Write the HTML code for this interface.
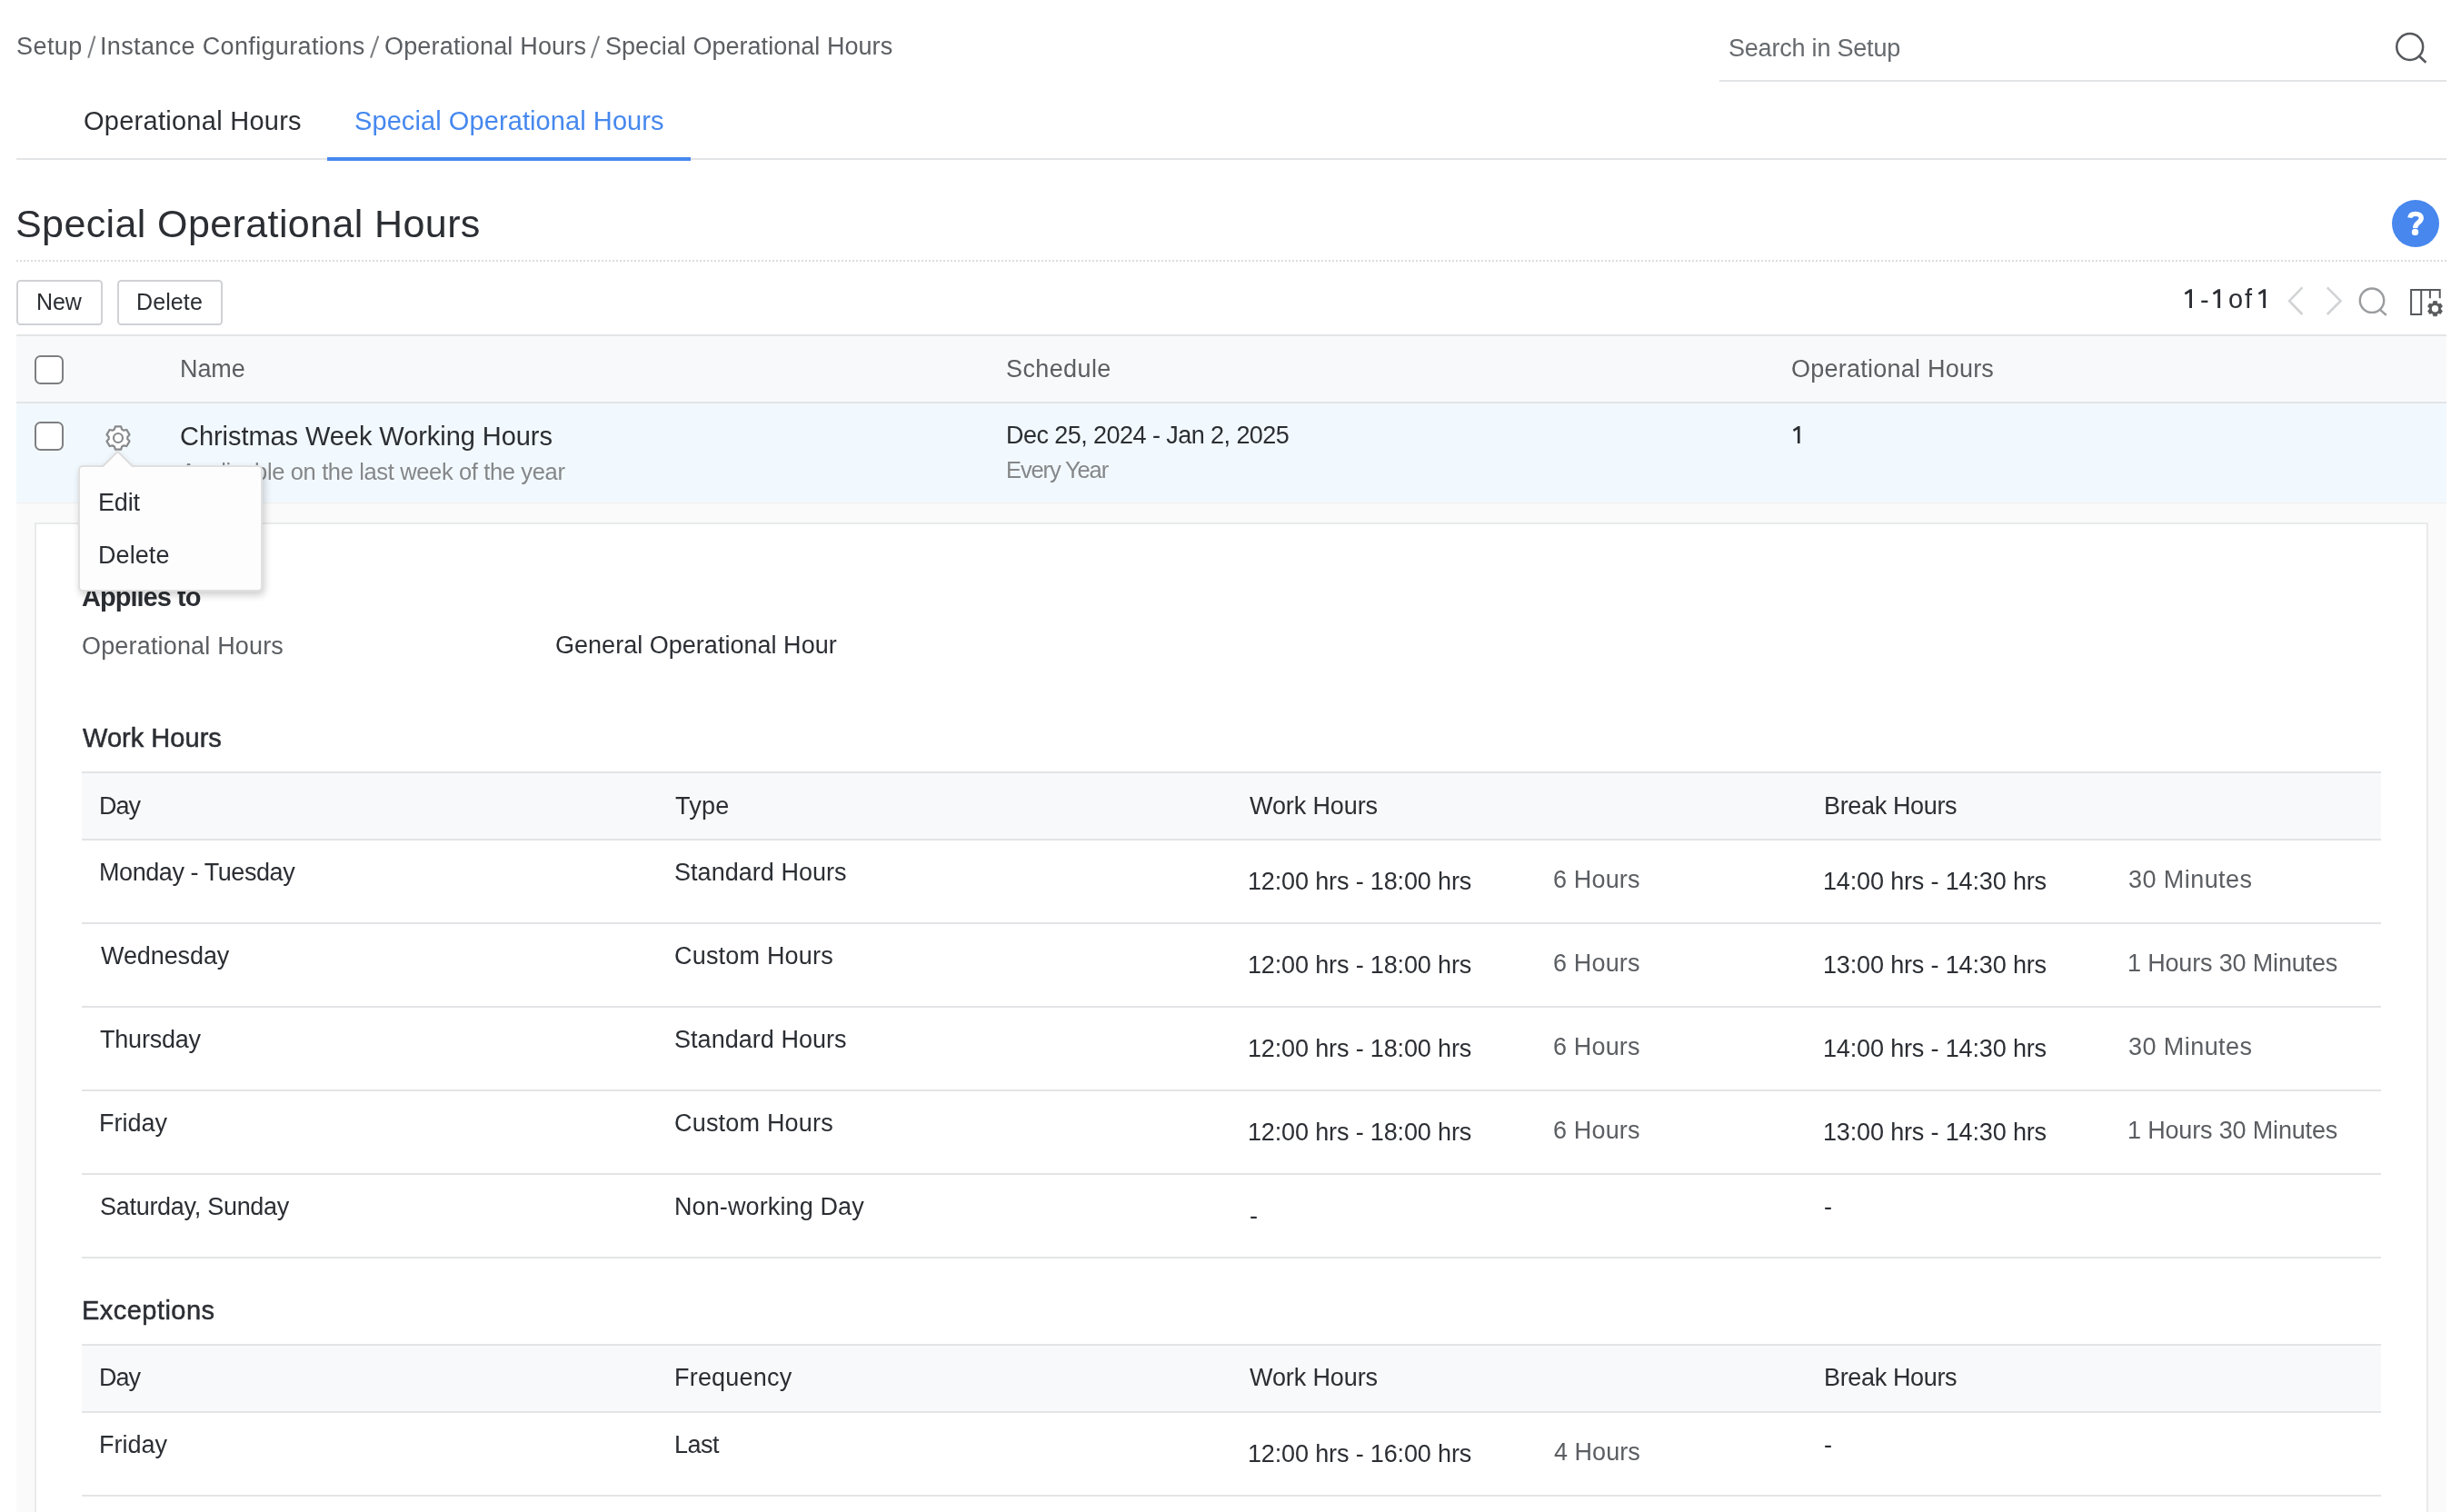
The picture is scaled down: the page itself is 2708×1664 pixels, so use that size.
<!DOCTYPE html>
<html><head><meta charset="utf-8"><title>Special Operational Hours</title>
<style>
html,body{margin:0;padding:0;background:#fff;}
body{width:2708px;height:1664px;overflow:hidden;position:relative;font-family:"Liberation Sans",sans-serif;}
.t{position:absolute;white-space:pre;will-change:transform;font-family:"Liberation Sans",sans-serif;}
.b{position:absolute;}
</style></head><body>
<div class="b" style="left:1892px;top:88px;width:800px;height:2px;background:#e3e4e6"></div>
<div class="b" style="left:18px;top:174px;width:2674px;height:2px;background:#e3e4e6"></div>
<div class="b" style="left:360px;top:173px;width:400px;height:4px;background:#4688ee"></div>
<div class="b" style="left:18px;top:286px;width:2674px;height:2px;background:repeating-linear-gradient(to right,#dddddd 0,#dddddd 2px,transparent 2px,transparent 4px)"></div>
<div class="b" style="left:18.2px;top:308px;width:94.4px;height:49.7px;box-sizing:border-box;border:2px solid #d0d1d4;border-radius:4.5px;background:#fff"></div>
<div class="b" style="left:129.1px;top:308px;width:115.75px;height:49.7px;box-sizing:border-box;border:2px solid #d0d1d4;border-radius:4.5px;background:#fff"></div>
<div class="b" style="left:18px;top:368px;width:2674px;height:76px;box-sizing:border-box;background:#f8f9fa;border-top:2px solid #e3e4e6;border-bottom:2px solid #e3e4e6"></div>
<div class="b" style="left:18px;top:444px;width:2674px;height:109px;background:#f2f9fe"></div>
<div class="b" style="left:18px;top:553px;width:2674px;height:1111px;background:#fafafa"></div>
<div class="b" style="left:18px;top:552.8px;width:2674px;height:1.6px;background:#efefef"></div>
<div class="b" style="left:38px;top:575px;width:2634px;height:1100px;box-sizing:border-box;background:#fff;border:2px solid #e9eaec"></div>
<div class="b" style="left:38px;top:391px;width:32px;height:32px;box-sizing:border-box;border:2px solid #7d7f82;border-radius:6.5px;background:#fff"></div>
<div class="b" style="left:38px;top:464px;width:32px;height:32px;box-sizing:border-box;border:2px solid #7d7f82;border-radius:6.5px;background:#fff"></div>
<div class="b" style="left:90px;top:849px;width:2530px;height:76px;box-sizing:border-box;background:#f8f9fa;border-top:2px solid #e3e4e6;border-bottom:2px solid #e3e4e6"></div><div class="b" style="left:90px;top:1015px;width:2530px;height:2px;background:#e3e4e6"></div><div class="b" style="left:90px;top:1107px;width:2530px;height:2px;background:#e3e4e6"></div><div class="b" style="left:90px;top:1199px;width:2530px;height:2px;background:#e3e4e6"></div><div class="b" style="left:90px;top:1291px;width:2530px;height:2px;background:#e3e4e6"></div><div class="b" style="left:90px;top:1383px;width:2530px;height:2px;background:#e3e4e6"></div>
<div class="b" style="left:90px;top:1479px;width:2530px;height:76px;box-sizing:border-box;background:#f8f9fa;border-top:2px solid #e3e4e6;border-bottom:2px solid #e3e4e6"></div><div class="b" style="left:90px;top:1645px;width:2530px;height:2px;background:#e3e4e6"></div>
<svg class="b" style="left:0;top:0" width="1000" height="80" viewBox="0 0 1000 80" fill="none" stroke="#7b7d80" stroke-width="2"><path d="M97.2 63.7 L104.4 39.6 M408 63.7 L416.3 39.6 M650.9 63.7 L659.1 39.6"/></svg>
<svg class="b" style="left:2630px;top:30px" width="48" height="48" viewBox="0 0 48 48" fill="none" stroke="#55585c" stroke-width="2.5"><circle cx="21.7" cy="21.5" r="14.45"/><path stroke-width="2.7" d="M32.0 31.7 L39.4 38.7"/></svg>
<div class="b" style="left:2632px;top:220px;width:52px;height:52px;border-radius:50%;background:#4787ee"></div>
<svg class="b" style="left:2632px;top:220px" width="52" height="52" viewBox="0 0 52 52" fill="none" stroke="#fff" stroke-width="5.3"><path d="M19.7 19.6 C20.2 16.8 22.8 15.3 26 15.3 C29.8 15.3 32.3 17.3 32.3 20.1 C32.3 22.4 30.9 23.6 28.9 25.1 C26.7 26.7 25.7 27.9 25.7 31"/><circle cx="25.5" cy="35.4" r="3.7" fill="#fff" stroke="none"/></svg>
<svg class="b" style="left:2390px;top:300px" width="120" height="50" viewBox="0 0 120 50" fill="#2b2e33"><path d="M19.70 18.20 L22.00 18.20 L22.00 39.00 L19.10 39.00 L19.10 21.90 L14.90 24.60 L13.70 22.30Z"/><path d="M50.80 18.20 L53.10 18.20 L53.10 39.00 L50.20 39.00 L50.20 21.90 L46.00 24.60 L44.80 22.30Z"/><path d="M100.80 18.20 L103.10 18.20 L103.10 39.00 L100.20 39.00 L100.20 21.90 L96.00 24.60 L94.80 22.30Z"/></svg>
<svg class="b" style="left:1960px;top:460px" width="40" height="40" viewBox="0 0 40 40" fill="#2b2e33"><path d="M18.46 9.00 L20.60 9.00 L20.60 28.00 L17.90 28.00 L17.90 12.44 L14.00 14.95 L12.88 12.81Z"/></svg>
<svg class="b" style="left:2510px;top:310px" width="76" height="44" viewBox="0 0 76 44" fill="none" stroke="#d2d3d5" stroke-width="2.6"><path d="M23.4 6.4 L9.1 21.2 L23.4 36"/><path d="M50.8 6.4 L65.5 21.2 L50.8 36"/></svg>
<svg class="b" style="left:2590px;top:310px" width="44" height="44" viewBox="0 0 44 44" fill="none" stroke="#9a9c9e" stroke-width="2.4"><circle cx="20.0" cy="20.7" r="13.2"/><path d="M29.0 30.8 L35.8 36.8"/></svg>
<svg class="b" style="left:2646px;top:312px" width="48" height="44" viewBox="0 0 48 44" fill="none" stroke="#57595c" stroke-width="2"><rect x="7.1" y="7" width="11.1" height="27"/><path d="M18.2 7 H38.7 V16.2 M27.9 7 V16.2"/><g transform="translate(33.5 27.7)"><path fill="#57595c" stroke="#57595c" stroke-width="0.8" stroke-linejoin="round" d="M2.48 -5.57 L1.87 -8.09 L-1.87 -8.09 L-2.48 -5.57 L-3.59 -4.94 L-6.07 -5.66 L-7.94 -2.43 L-6.07 -0.64 L-6.07 0.64 L-7.94 2.43 L-6.07 5.66 L-3.59 4.94 L-2.48 5.57 L-1.87 8.09 L1.87 8.09 L2.48 5.57 L3.59 4.94 L6.07 5.66 L7.94 2.43 L6.07 0.64 L6.07 -0.64 L7.94 -2.43 L6.07 -5.66 L3.59 -4.94Z"/><circle cx="0" cy="0" r="3.7" fill="#fff" stroke="none"/></g></svg>
<svg class="b" style="left:113.8px;top:465.8px" width="32" height="32" viewBox="-16 -16 32 32" fill="#fff" stroke="#87898c" stroke-width="2.2" stroke-linejoin="round"><path d="M4.06 -9.57 L3.14 -12.61 L-3.14 -12.61 L-4.06 -9.57 L-6.26 -8.31 L-9.35 -9.03 L-12.50 -3.58 L-10.32 -1.27 L-10.32 1.27 L-12.50 3.58 L-9.35 9.03 L-6.26 8.31 L-4.06 9.57 L-3.14 12.61 L3.14 12.61 L4.06 9.57 L6.26 8.31 L9.35 9.03 L12.50 3.58 L10.32 1.27 L10.32 -1.27 L12.50 -3.58 L9.35 -9.03 L6.26 -8.31Z"/><circle cx="0" cy="0" r="5"/></svg>
<span class="t" id="bc1" style="left:17.51px;top:35.86px;font-size:27px;line-height:30.159px;color:#5b5e62;letter-spacing:0.438px;">Setup</span>
<span class="t" id="bc2" style="left:110.40px;top:35.86px;font-size:27px;line-height:30.159px;color:#5b5e62;letter-spacing:0.349px;">Instance Configurations</span>
<span class="t" id="bc3" style="left:422.96px;top:35.86px;font-size:27px;line-height:30.159px;color:#5b5e62;letter-spacing:0.178px;">Operational Hours</span>
<span class="t" id="bc4" style="left:665.81px;top:35.86px;font-size:27px;line-height:30.159px;color:#5b5e62;letter-spacing:0.040px;">Special Operational Hours</span>
<span class="t" id="search" style="left:1901.81px;top:37.56px;font-size:27px;line-height:30.159px;color:#666a6e;letter-spacing:-0.209px;">Search in Setup</span>
<span class="t" id="tab1" style="left:91.56px;top:116.66px;font-size:29px;line-height:32.393px;color:#2b2e33;letter-spacing:0.267px;">Operational Hours</span>
<span class="t" id="tab2" style="left:390.06px;top:116.66px;font-size:29px;line-height:32.393px;color:#4688ee;letter-spacing:0.085px;">Special Operational Hours</span>
<span class="t" id="title" style="left:17.19px;top:221.89px;font-size:43px;line-height:48.031px;color:#2b2e33;letter-spacing:0.392px;">Special Operational Hours</span>
<span class="t" id="new" style="left:39.84px;top:318.57px;font-size:25px;line-height:27.925px;color:#2b2e33;letter-spacing:-0.091px;">New</span>
<span class="t" id="del" style="left:150.24px;top:318.57px;font-size:25px;line-height:27.925px;color:#2b2e33;letter-spacing:0.113px;">Delete</span>
<span class="t" id="pg2" style="left:2420.50px;top:313.66px;font-size:29px;line-height:32.393px;color:#2b2e33;letter-spacing:0.000px;">-</span>
<span class="t" id="pg4" style="left:2451.64px;top:312.56px;font-size:29px;line-height:32.393px;color:#2b2e33;letter-spacing:1.922px;">of</span>
<span class="t" id="h_name" style="left:197.76px;top:390.87px;font-size:27px;line-height:30.159px;color:#5b5e62;letter-spacing:-0.076px;">Name</span>
<span class="t" id="h_sched" style="left:1106.51px;top:390.87px;font-size:27px;line-height:30.159px;color:#5b5e62;letter-spacing:0.387px;">Schedule</span>
<span class="t" id="h_oh" style="left:1970.66px;top:390.87px;font-size:27px;line-height:30.159px;color:#5b5e62;letter-spacing:0.235px;">Operational Hours</span>
<span class="t" id="r_name" style="left:197.57px;top:463.75px;font-size:29px;line-height:32.393px;color:#2b2e33;letter-spacing:-0.058px;">Christmas Week Working Hours</span>
<span class="t" id="r_sub" style="left:199.23px;top:505.02px;font-size:25.5px;line-height:28.483px;color:#858789;letter-spacing:-0.361px;">Applicable on the last week of the year</span>
<span class="t" id="r_date" style="left:1106.76px;top:463.87px;font-size:27px;line-height:30.159px;color:#2b2e33;letter-spacing:-0.557px;">Dec 25, 2024 - Jan 2, 2025</span>
<span class="t" id="r_every" style="left:1106.89px;top:503.32px;font-size:25.5px;line-height:28.483px;color:#858789;letter-spacing:-1.131px;">Every Year</span>
<span class="t" id="applies" style="left:90.19px;top:640.65px;font-size:29px;line-height:32.393px;color:#2b2e33;letter-spacing:-0.977px;font-weight:bold;">Applies to</span>
<span class="t" id="l_oh" style="left:89.86px;top:695.66px;font-size:27px;line-height:30.159px;color:#5b5e62;letter-spacing:0.172px;">Operational Hours</span>
<span class="t" id="v_goh" style="left:610.98px;top:695.46px;font-size:27px;line-height:30.159px;color:#2b2e33;letter-spacing:0.023px;">General Operational Hour</span>
<span class="t" id="wh_title" style="left:90.59px;top:795.75px;font-size:29px;line-height:32.393px;color:#2b2e33;letter-spacing:0.036px;-webkit-text-stroke:0.5px currentColor;">Work Hours</span>
<span class="t" id="ex_title" style="left:89.93px;top:1425.96px;font-size:29px;line-height:32.393px;color:#2b2e33;letter-spacing:0.461px;-webkit-text-stroke:0.5px currentColor;">Exceptions</span>
<span class="t" id="wh_h0" style="left:109.26px;top:871.87px;font-size:27px;line-height:30.159px;color:#2b2e33;letter-spacing:-1.005px;">Day</span>
<span class="t" id="wh_h1" style="left:742.58px;top:871.87px;font-size:27px;line-height:30.159px;color:#2b2e33;letter-spacing:0.210px;">Type</span>
<span class="t" id="wh_h2" style="left:1375.46px;top:871.87px;font-size:27px;line-height:30.159px;color:#2b2e33;letter-spacing:-0.105px;">Work Hours</span>
<span class="t" id="wh_h3" style="left:2006.96px;top:871.87px;font-size:27px;line-height:30.159px;color:#2b2e33;letter-spacing:-0.345px;">Break Hours</span>
<span class="t" id="ex_h0" style="left:109.26px;top:1501.46px;font-size:27px;line-height:30.159px;color:#2b2e33;letter-spacing:-1.005px;">Day</span>
<span class="t" id="ex_h1" style="left:742.16px;top:1501.46px;font-size:27px;line-height:30.159px;color:#2b2e33;letter-spacing:0.197px;">Frequency</span>
<span class="t" id="ex_h2" style="left:1375.46px;top:1501.46px;font-size:27px;line-height:30.159px;color:#2b2e33;letter-spacing:-0.105px;">Work Hours</span>
<span class="t" id="ex_h3" style="left:2006.96px;top:1501.46px;font-size:27px;line-height:30.159px;color:#2b2e33;letter-spacing:-0.345px;">Break Hours</span>
<span class="t" id="wr0_day" style="left:108.86px;top:944.87px;font-size:27px;line-height:30.159px;color:#2b2e33;letter-spacing:-0.427px;">Monday - Tuesday</span>
<span class="t" id="wr0_typ" style="left:742.01px;top:944.87px;font-size:27px;line-height:30.159px;color:#2b2e33;letter-spacing:0.039px;">Standard Hours</span>
<span class="t" id="wr0_wh" style="left:1373.42px;top:954.87px;font-size:27px;line-height:30.159px;color:#2b2e33;letter-spacing:-0.143px;">12:00 hrs - 18:00 hrs</span>
<span class="t" id="wr0_whd" style="left:1709.18px;top:953.07px;font-size:27px;line-height:30.159px;color:#5b5e62;letter-spacing:0.158px;">6 Hours</span>
<span class="t" id="wr0_bh" style="left:2005.82px;top:954.87px;font-size:27px;line-height:30.159px;color:#2b2e33;letter-spacing:-0.153px;">14:00 hrs - 14:30 hrs</span>
<span class="t" id="wr0_bhd" style="left:2342.43px;top:953.07px;font-size:27px;line-height:30.159px;color:#5b5e62;letter-spacing:0.431px;">30 Minutes</span>
<span class="t" id="wr1_day" style="left:110.51px;top:1036.87px;font-size:27px;line-height:30.159px;color:#2b2e33;letter-spacing:-0.095px;">Wednesday</span>
<span class="t" id="wr1_typ" style="left:741.88px;top:1036.87px;font-size:27px;line-height:30.159px;color:#2b2e33;letter-spacing:0.195px;">Custom Hours</span>
<span class="t" id="wr1_wh" style="left:1373.42px;top:1046.87px;font-size:27px;line-height:30.159px;color:#2b2e33;letter-spacing:-0.143px;">12:00 hrs - 18:00 hrs</span>
<span class="t" id="wr1_whd" style="left:1709.18px;top:1045.07px;font-size:27px;line-height:30.159px;color:#5b5e62;letter-spacing:0.158px;">6 Hours</span>
<span class="t" id="wr1_bh" style="left:2005.82px;top:1046.87px;font-size:27px;line-height:30.159px;color:#2b2e33;letter-spacing:-0.153px;">13:00 hrs - 14:30 hrs</span>
<span class="t" id="wr1_bhd" style="left:2340.82px;top:1045.07px;font-size:27px;line-height:30.159px;color:#5b5e62;letter-spacing:-0.165px;">1 Hours 30 Minutes</span>
<span class="t" id="wr2_day" style="left:110.18px;top:1128.87px;font-size:27px;line-height:30.159px;color:#2b2e33;letter-spacing:-0.207px;">Thursday</span>
<span class="t" id="wr2_typ" style="left:742.01px;top:1128.87px;font-size:27px;line-height:30.159px;color:#2b2e33;letter-spacing:0.039px;">Standard Hours</span>
<span class="t" id="wr2_wh" style="left:1373.42px;top:1138.87px;font-size:27px;line-height:30.159px;color:#2b2e33;letter-spacing:-0.143px;">12:00 hrs - 18:00 hrs</span>
<span class="t" id="wr2_whd" style="left:1709.18px;top:1137.07px;font-size:27px;line-height:30.159px;color:#5b5e62;letter-spacing:0.158px;">6 Hours</span>
<span class="t" id="wr2_bh" style="left:2005.82px;top:1138.87px;font-size:27px;line-height:30.159px;color:#2b2e33;letter-spacing:-0.153px;">14:00 hrs - 14:30 hrs</span>
<span class="t" id="wr2_bhd" style="left:2342.43px;top:1137.07px;font-size:27px;line-height:30.159px;color:#5b5e62;letter-spacing:0.431px;">30 Minutes</span>
<span class="t" id="wr3_day" style="left:109.36px;top:1220.87px;font-size:27px;line-height:30.159px;color:#2b2e33;letter-spacing:-0.022px;">Friday</span>
<span class="t" id="wr3_typ" style="left:741.88px;top:1220.87px;font-size:27px;line-height:30.159px;color:#2b2e33;letter-spacing:0.195px;">Custom Hours</span>
<span class="t" id="wr3_wh" style="left:1373.42px;top:1230.87px;font-size:27px;line-height:30.159px;color:#2b2e33;letter-spacing:-0.143px;">12:00 hrs - 18:00 hrs</span>
<span class="t" id="wr3_whd" style="left:1709.18px;top:1229.07px;font-size:27px;line-height:30.159px;color:#5b5e62;letter-spacing:0.158px;">6 Hours</span>
<span class="t" id="wr3_bh" style="left:2005.82px;top:1230.87px;font-size:27px;line-height:30.159px;color:#2b2e33;letter-spacing:-0.153px;">13:00 hrs - 14:30 hrs</span>
<span class="t" id="wr3_bhd" style="left:2340.82px;top:1229.07px;font-size:27px;line-height:30.159px;color:#5b5e62;letter-spacing:-0.165px;">1 Hours 30 Minutes</span>
<span class="t" id="wr4_day" style="left:109.81px;top:1312.87px;font-size:27px;line-height:30.159px;color:#2b2e33;letter-spacing:-0.288px;">Saturday, Sunday</span>
<span class="t" id="wr4_typ" style="left:742.16px;top:1312.87px;font-size:27px;line-height:30.159px;color:#2b2e33;letter-spacing:0.114px;">Non-working Day</span>
<span class="t" id="wr4_wh" style="left:1374.77px;top:1322.87px;font-size:27px;line-height:30.159px;color:#2b2e33;letter-spacing:0.000px;">-</span>
<span class="t" id="wr4_bh" style="left:2007.17px;top:1312.87px;font-size:27px;line-height:30.159px;color:#2b2e33;letter-spacing:0.000px;">-</span>
<span class="t" id="er_day" style="left:109.36px;top:1574.87px;font-size:27px;line-height:30.159px;color:#2b2e33;letter-spacing:-0.022px;">Friday</span>
<span class="t" id="er_typ" style="left:742.16px;top:1574.87px;font-size:27px;line-height:30.159px;color:#2b2e33;letter-spacing:-0.479px;">Last</span>
<span class="t" id="er_wh" style="left:1373.42px;top:1584.87px;font-size:27px;line-height:30.159px;color:#2b2e33;letter-spacing:-0.143px;">12:00 hrs - 16:00 hrs</span>
<span class="t" id="er_whd" style="left:1709.97px;top:1583.07px;font-size:27px;line-height:30.159px;color:#5b5e62;letter-spacing:0.025px;">4 Hours</span>
<span class="t" id="er_bh" style="left:2007.17px;top:1574.87px;font-size:27px;line-height:30.159px;color:#2b2e33;letter-spacing:0.000px;">-</span>
<div class="b" style="left:86.2px;top:512px;width:203.2px;height:139.3px;box-sizing:border-box;background:#fdfdfd;border:2px solid #e0e0e0;border-radius:5px;box-shadow:2px 4px 9px rgba(0,0,0,0.2)"></div>
<div class="b" style="left:99.5px;top:484px;width:60px;height:30.2px;overflow:hidden"><div class="b" style="left:16.5px;top:16.5px;width:27px;height:27px;box-sizing:border-box;background:#fdfdfd;border:2.8px solid #dcdcdc;transform:rotate(45deg);box-shadow:-1px -1px 5px rgba(0,0,0,0.05)"></div></div>
<span class="t" id="p_edit" style="left:107.86px;top:537.87px;font-size:27px;line-height:30.159px;color:#2b2e33;letter-spacing:-0.185px;">Edit</span>
<span class="t" id="p_del" style="left:107.86px;top:596.07px;font-size:27px;line-height:30.159px;color:#2b2e33;letter-spacing:0.074px;">Delete</span>
</body></html>
